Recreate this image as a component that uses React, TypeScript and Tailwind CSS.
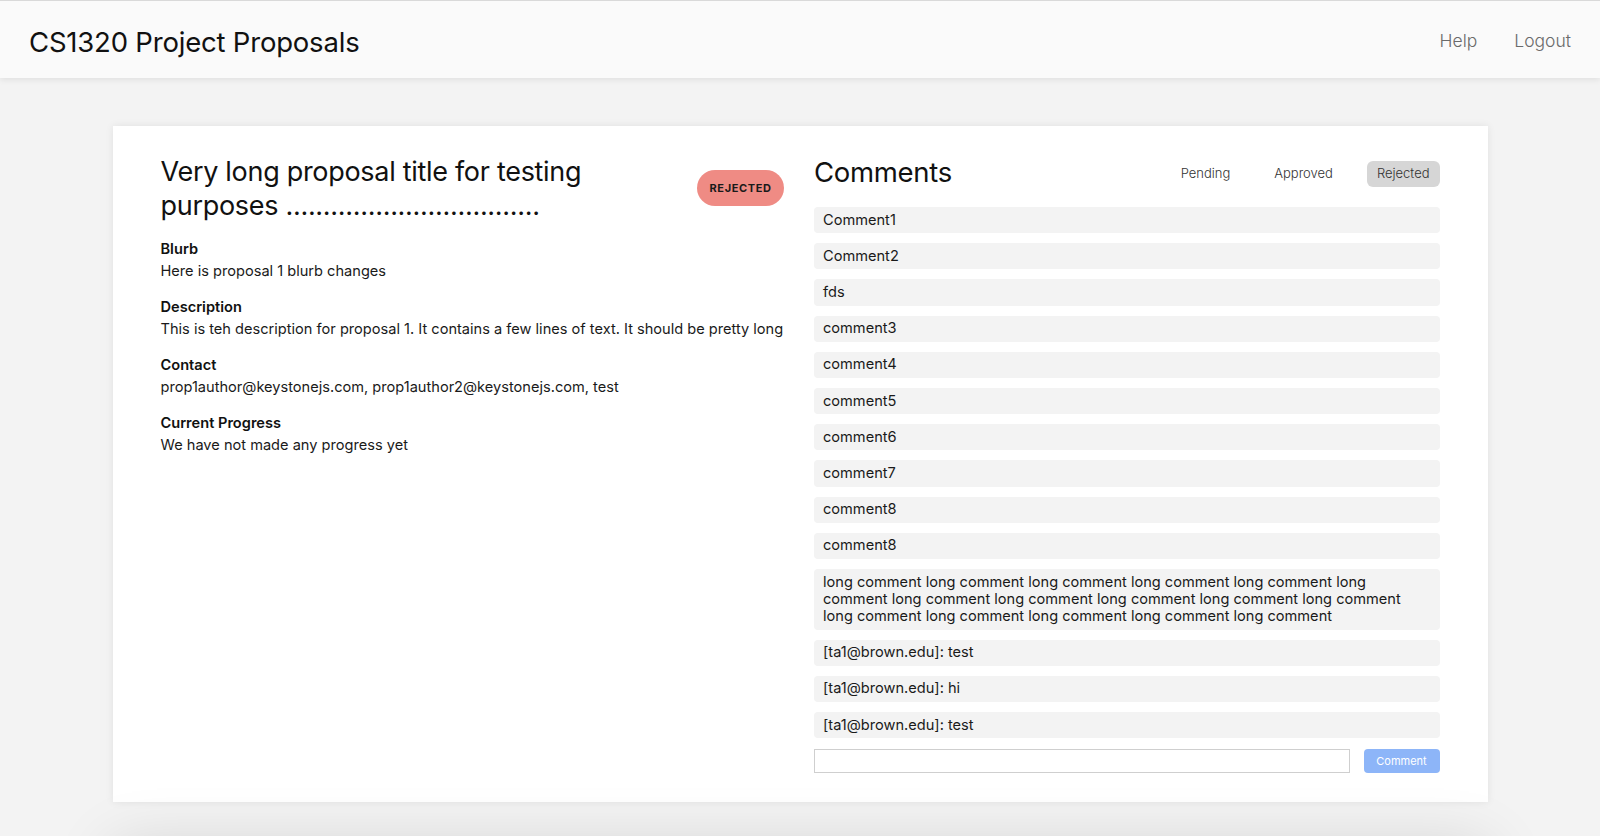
import React from "react";

const comments: string[] = [
  "Comment1",
  "Comment2",
  "fds",
  "comment3",
  "comment4",
  "comment5",
  "comment6",
  "comment7",
  "comment8",
  "comment8",
  "long comment long comment long comment long comment long comment long comment long comment long comment long comment long comment long comment long comment long comment long comment long comment long comment",
  "[ta1@brown.edu]: test",
  "[ta1@brown.edu]: hi",
  "[ta1@brown.edu]: test",
];

const sections = [
  { label: "Blurb", value: "Here is proposal 1 blurb changes" },
  {
    label: "Description",
    value:
      "This is teh description for proposal 1. It contains a few lines of text. It should be pretty long",
  },
  {
    label: "Contact",
    value: "prop1author@keystonejs.com, prop1author2@keystonejs.com, test",
  },
  { label: "Current Progress", value: "We have not made any progress yet" },
];

export default function App() {
  return (
    <div
      className="h-[836px] overflow-hidden bg-[#f3f3f3] text-[#111]"
      style={{ fontFamily: "Inter, 'Noto Sans', Arial, sans-serif" }}
    >
      <header className="h-[78px] border-t border-[#d9d9d9] bg-[#fafafa] shadow-[0_2px_6px_rgba(0,0,0,0.08)] flex items-center justify-between pl-[29px] pr-[29px] pt-[7px] relative z-10">
        <h1 className="text-[27.5px] font-normal tracking-[-0.2px] text-[#111]">
          CS1320 Project Proposals
        </h1>
        <nav className="flex items-center gap-[37px] text-[17.5px] font-light text-[#6a6a6a] pb-[4px]">
          <span>Help</span>
          <span>Logout</span>
        </nav>
      </header>

      <main className="pt-[48px]">
        <div className="mx-auto w-[1375px] bg-white shadow-[0_0_8px_rgba(0,0,0,0.08)] pl-[48px] pr-[48px] pt-[29px] pb-[29px] flex gap-[28px]">
          {/* Left column */}
          <section className="flex-1 min-w-0">
            <div className="flex items-start justify-between">
              <h2 className="text-[27px] leading-[34px] font-normal tracking-[-0.3px] max-w-[520px]">
                Very long proposal title for testing purposes ..................................
              </h2>
              <span className="mt-[15px] mr-[2px] h-[36px] w-[87px] rounded-full bg-[#ef8b84] flex items-center justify-center text-[11px] font-bold tracking-[0.6px] text-[#1a1a1a]">
                REJECTED
              </span>
            </div>
            <div className="mt-[15px] flex flex-col gap-[14px]">
              {sections.map((s) => (
                <div key={s.label} className="text-[14.6px] leading-[22px]">
                  <div className="font-semibold">{s.label}</div>
                  <div className="font-normal text-[#1a1a1a] whitespace-nowrap">{s.value}</div>
                </div>
              ))}
            </div>
          </section>

          {/* Right column */}
          <section className="flex-1 min-w-0">
            <div className="flex items-center justify-between h-[34px]">
              <h2 className="text-[27.5px] leading-[34px] font-normal tracking-[-0.3px]">
                Comments
              </h2>
              <div className="flex items-center gap-[24px] text-[13px] font-light text-[#333] mt-[4px]">
                <span className="px-[10px] h-[26px] flex items-center rounded-[6px]">Pending</span>
                <span className="px-[10px] h-[26px] flex items-center rounded-[6px]">Approved</span>
                <span className="px-[10px] h-[26px] flex items-center rounded-[6px] bg-[#d6d6d6]">
                  Rejected
                </span>
              </div>
            </div>
            <ul className="mt-[18px] flex flex-col gap-[10px]">
              {comments.map((c, i) => (
                <li
                  key={i}
                  className="bg-[#f3f3f3] rounded-[4px] px-[9px] py-[4.5px] text-[14.6px] leading-[17.2px] text-[#1a1a1a]"
                >
                  {c}
                </li>
              ))}
            </ul>
            <div className="mt-[11px] flex items-center gap-[14px]">
              <input
                className="h-[24px] flex-1 border border-[#cfcfcf] bg-white outline-none"
                type="text"
              />
              <button className="h-[24px] w-[76px] rounded-[4px] bg-[#8db5f8] text-white text-[11px]">
                Comment
              </button>
            </div>
          </section>
        </div>
        <div className="mt-[45px] mx-auto w-[1375px] h-[200px] bg-white shadow-[0_0_60px_rgba(0,0,0,0.14)]" />
      </main>
    </div>
  );
}
